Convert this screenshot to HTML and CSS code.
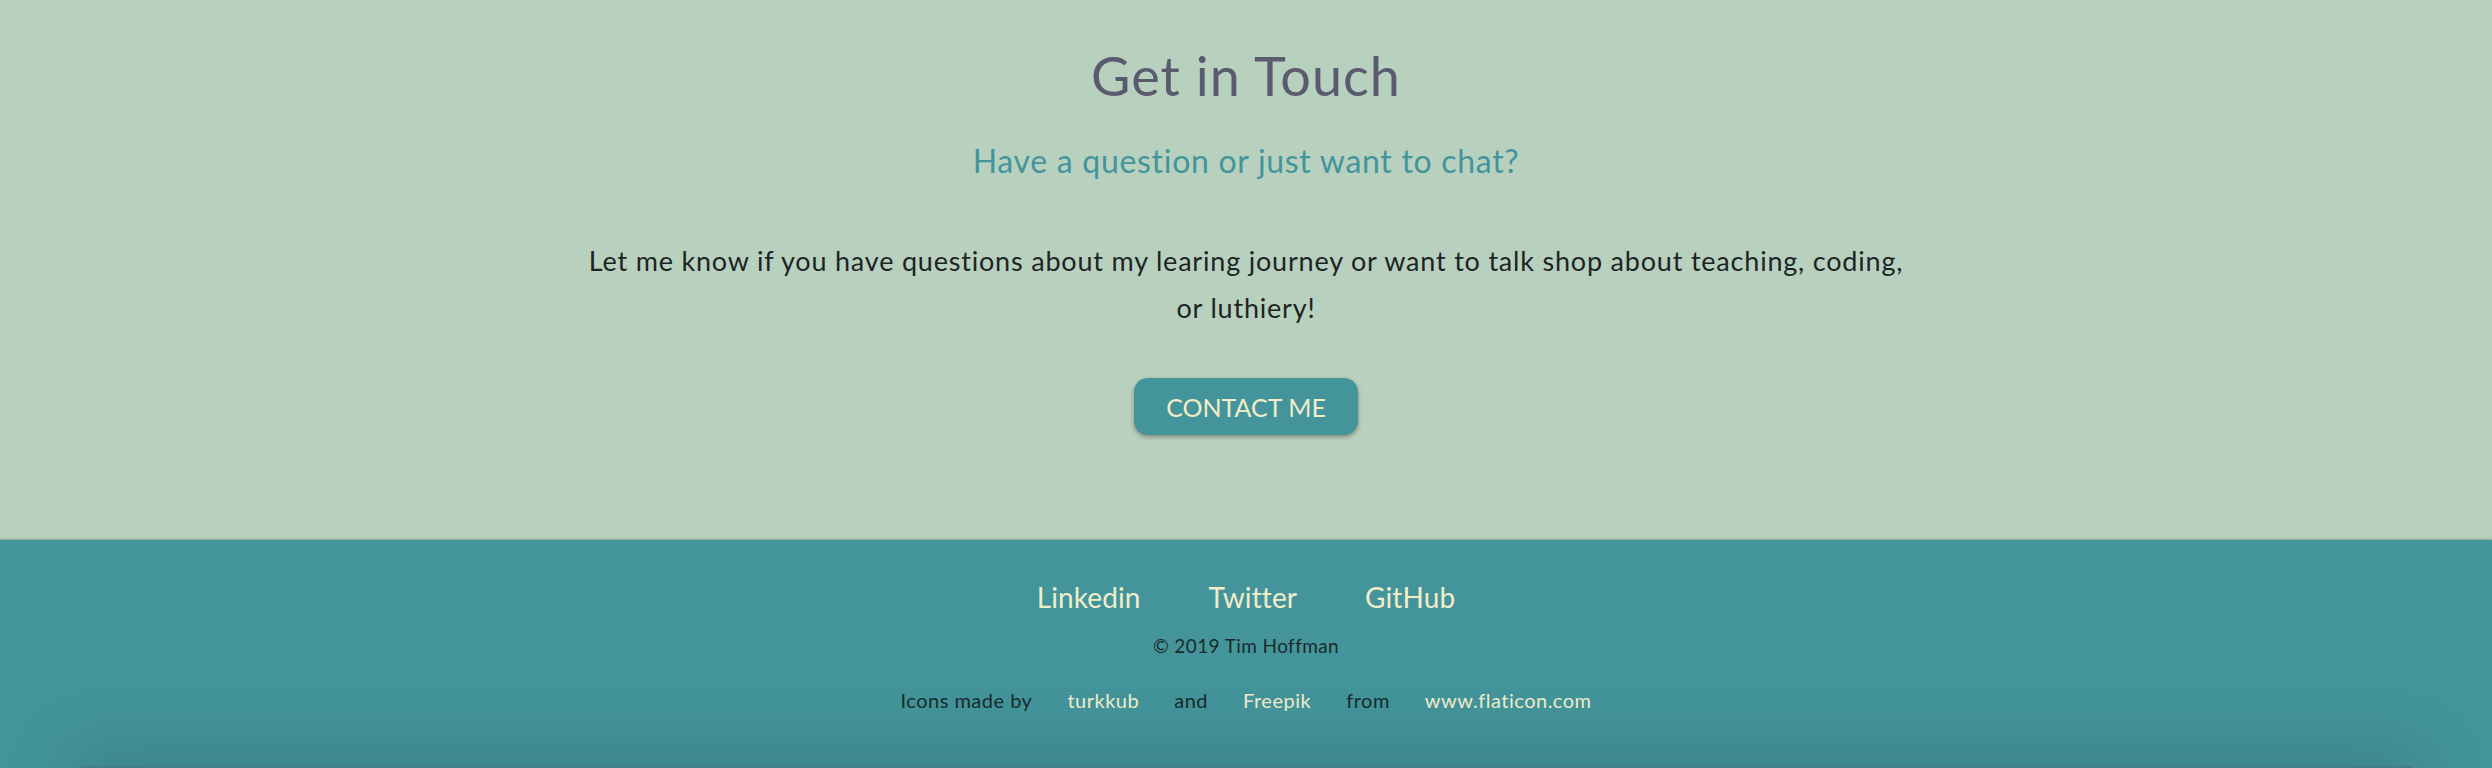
FILE: index.html
```html
<!DOCTYPE html>
<html lang="en">
<head>
<meta charset="utf-8">
<title>Get in Touch</title>
<link rel="stylesheet" href="styles.css">
</head>
<body>
<section class="contact">
  <h2 class="contact-title">Get in Touch</h2>
  <h3 class="contact-subtitle">Have a question or just want to chat?</h3>
  <p class="contact-text">Let me know if you have questions about my learing journey or want to talk shop about teaching, coding, or luthiery!</p>
  <a class="contact-button" href="#">CONTACT ME</a>
</section>
<footer class="footer">
  <nav class="footer-links">
    <a href="#">Linkedin</a>
    <a href="#">Twitter</a>
    <a href="#">GitHub</a>
  </nav>
  <p class="copyright">© 2019 Tim Hoffman</p>
  <p class="credits">
    <span>Icons made by</span>
    <a href="#">turkkub</a>
    <span>and</span>
    <a href="#">Freepik</a>
    <span>from</span>
    <a href="#">www.flaticon.com</a>
  </p>
</footer>
</body>
</html>
```
FILE: styles.css
```css
* { box-sizing: border-box; }

html, body {
  margin: 0;
  padding: 0;
}

body {
  font-family: Lato, "Liberation Sans", sans-serif;
  background: #b8d1bf;
  color: #1e2424;
  overflow: hidden;
}

.contact {
  height: 540px;
  display: flex;
  flex-direction: column;
  align-items: center;
  padding-top: 42px;
}

.contact-title {
  margin: 0;
  font-size: 54px;
  font-weight: 400;
  letter-spacing: 1px;
  line-height: 68px;
  color: #5a5b6e;
}

.contact-subtitle {
  margin: 31px 0 0;
  font-size: 32px;
  font-weight: 400;
  letter-spacing: 0.7px;
  line-height: 40px;
  color: #43959b;
}

.contact-text {
  margin: 56px 0 0;
  max-width: 1322px;
  text-align: center;
  font-size: 27px;
  letter-spacing: 0.8px;
  line-height: 47px;
  color: #1e2424;
}

.contact-button {
  margin-top: 47px;
  width: 224px;
  height: 57px;
  display: flex;
  align-items: center;
  justify-content: center;
  background: #43959b;
  color: #f1edc9;
  border-radius: 14px;
  text-decoration: none;
  font-size: 25px;
  box-shadow: 0 2px 4px rgba(60, 50, 40, 0.45);
}

.footer {
  position: relative;
  height: 228px;
  background: #43959b;
  box-shadow: 0 -1px 2px rgba(0, 0, 0, 0.25);
  display: flex;
  flex-direction: column;
  align-items: center;
  padding-top: 40px;
}

.footer::after {
  content: "";
  position: absolute;
  left: 82px;
  right: 80px;
  top: 226px;
  height: 40px;
  background: #3f7f85;
  box-shadow: 0 0 70px 6px rgba(40, 60, 60, 0.3);
}

.footer-links {
  display: flex;
  gap: 68px;
}

.footer-links a {
  color: #f1edc9;
  text-decoration: none;
  font-size: 28px;
  letter-spacing: 0.1px;
  line-height: 34px;
}

.copyright {
  margin: 20px 0 0;
  font-size: 19px;
  letter-spacing: 0.4px;
  line-height: 24px;
  color: #1a2a2a;
}

.credits {
  margin: 30px 0 0;
  display: flex;
  gap: 35px;
  font-size: 20px;
  letter-spacing: 0.5px;
  line-height: 24px;
  color: #1a2a2a;
}

.credits a {
  color: #f1edc9;
  text-decoration: none;
}
```
